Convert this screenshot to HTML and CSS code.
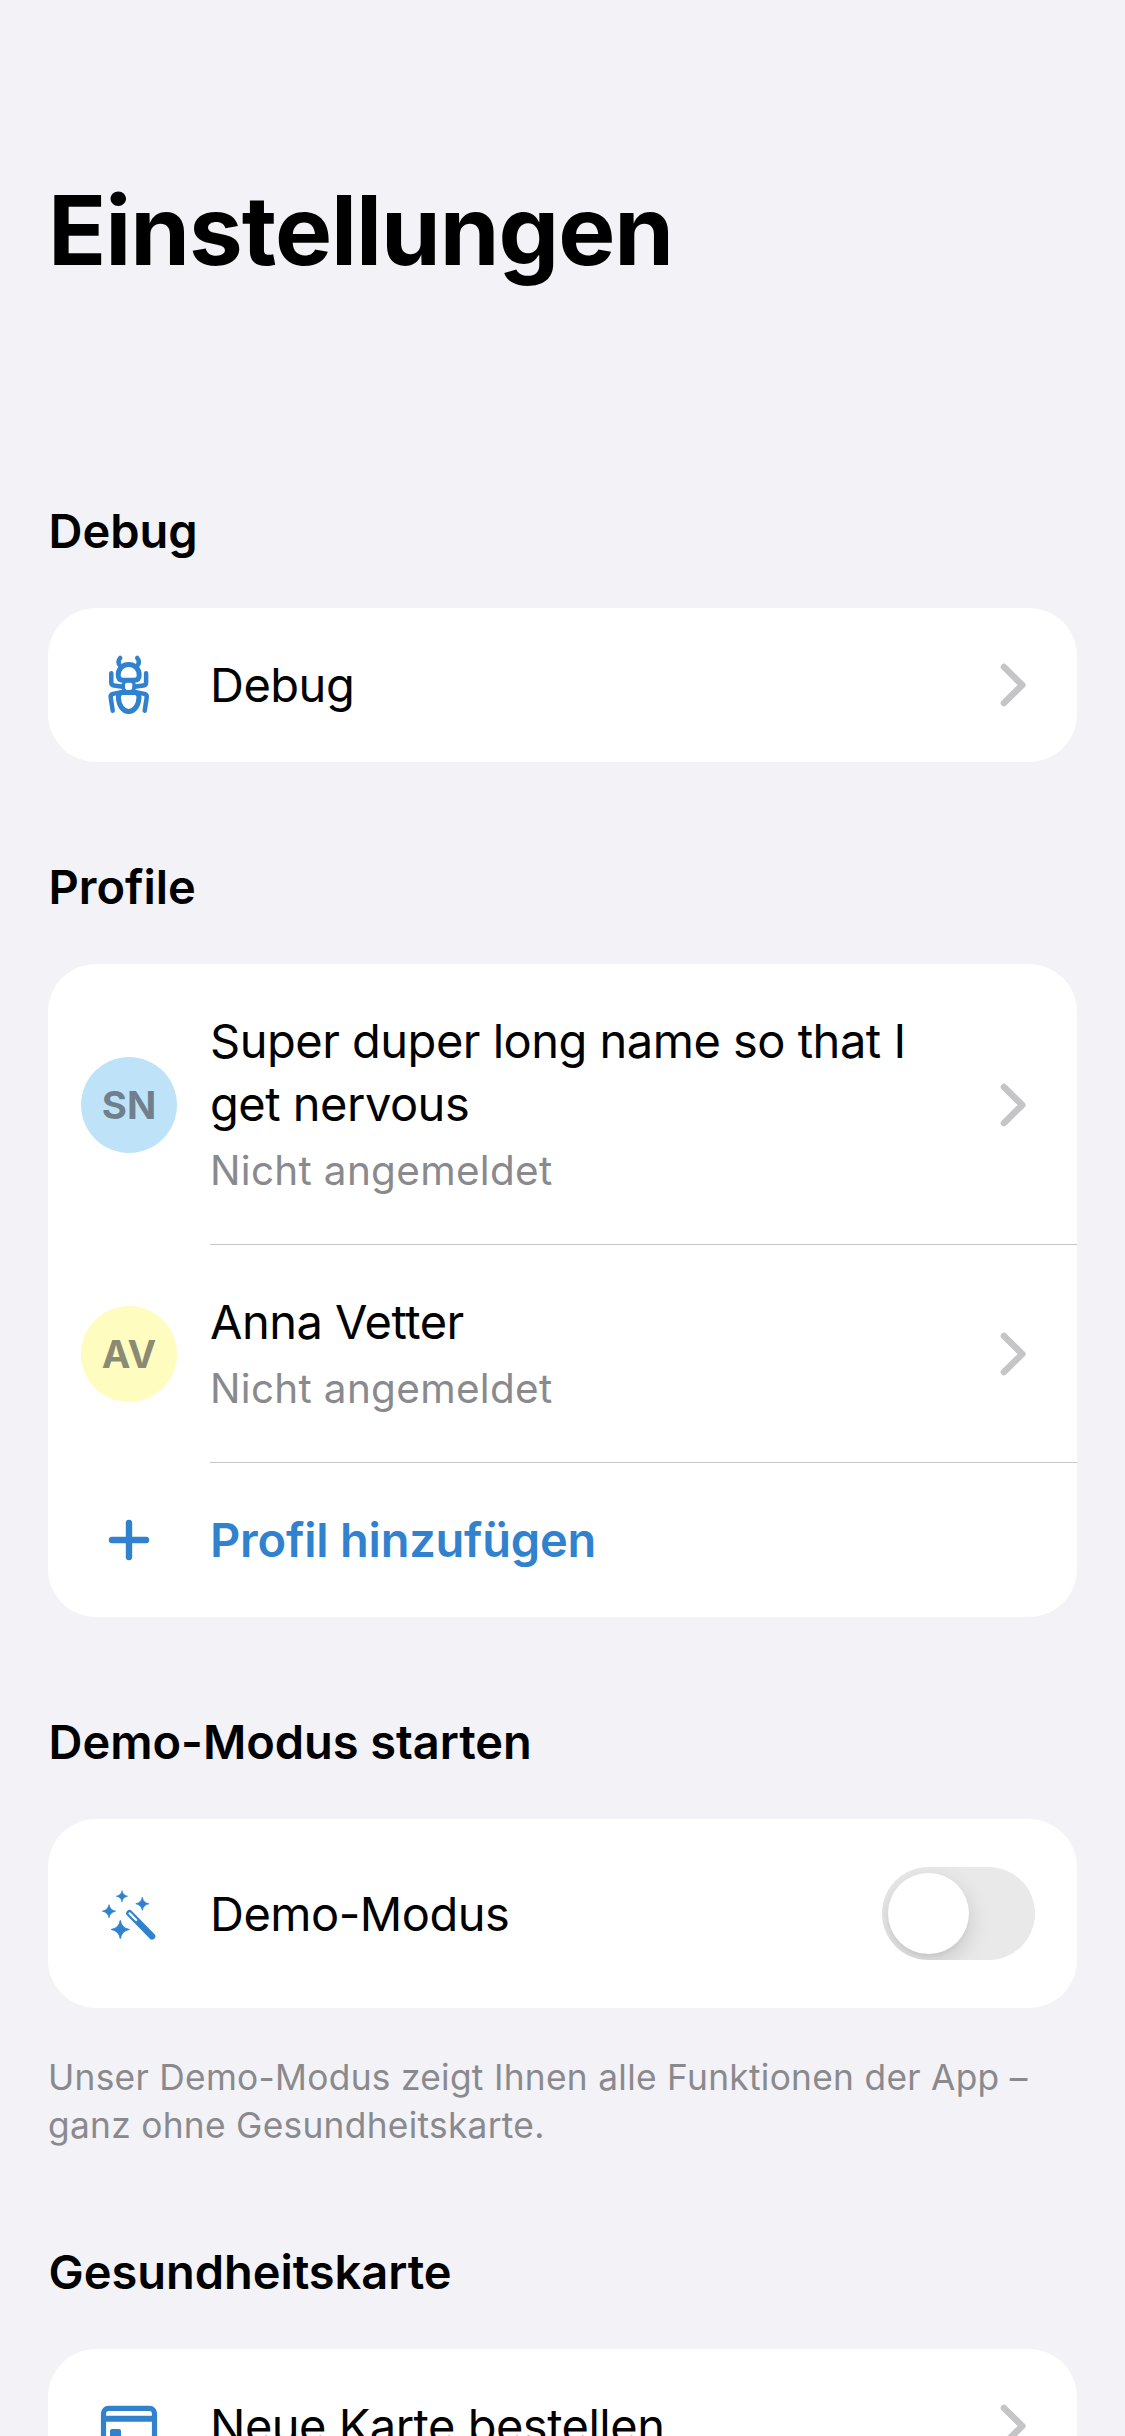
FILE: index.html
```
<!DOCTYPE html>
<html lang="de">
<head>
<meta charset="utf-8">
<title>Einstellungen</title>
<link rel="stylesheet" href="styles.css">
</head>
<body>
<svg class="defs" aria-hidden="true">
  <symbol id="chevron" viewBox="0 0 26 44">
    <path d="M4 4 22.3 22 4 40" fill="none" stroke="currentColor" stroke-width="6.6" stroke-linecap="round" stroke-linejoin="round"/>
  </symbol>
  <symbol id="star" viewBox="-1 -1 2 2">
    <path d="M0-.95Q.14-.14.95 0Q.14.14 0 .95Q-.14.14-.95 0Q-.14-.14 0-.95Z" fill="currentColor" stroke="currentColor" stroke-width=".1" stroke-linejoin="round"/>
  </symbol>
</svg>
<main class="screen">
  <h1 class="title">Einstellungen</h1>

  <section class="section">
    <h2 class="heading">Debug</h2>
    <div class="card">
      <div class="row">
        <svg class="lead" viewBox="0 0 96 96" fill="none" stroke="currentColor" stroke-width="5" stroke-linecap="round" stroke-linejoin="round">
          <path d="M42 43.2C38.8 43.2 37.2 41.2 37.2 38C37.2 31.5 42 27.6 47.7 27.6S58.2 31.5 58.2 38C58.2 41.2 56.6 43.2 53.4 43.2Z"/>
          <circle cx="47.7" cy="49.3" r="5.8" stroke-width="3.6"/>
          <path d="M42 55.6H53.4C56.5 55.6 58 57.3 58 60C58 68 53.5 74.4 47.7 74.4S37.4 68 37.4 60C37.4 57.3 39 55.6 42 55.6Z"/>
          <path stroke-width="4.5" d="M39.2 21C37 23.5 36.8 26.5 39.7 29.5M56.2 21C58.4 23.5 58.6 26.5 55.7 29.5M30.3 36.3V45.4Q30.3 48 33 48.4L42 49.8M65.1 36.3V45.4Q65.1 48 62.4 48.4L53.4 49.8M31.7 73.7 29.7 60.6Q29.2 57.6 32 56.9L43 54.6M63.7 73.7 65.7 60.6Q66.2 57.6 63.4 56.9L52.4 54.6"/>
        </svg>
        <div class="content">
          <div class="label">Debug</div>
          <svg class="chevron"><use href="#chevron"/></svg>
        </div>
      </div>
    </div>
  </section>

  <section class="section">
    <h2 class="heading">Profile</h2>
    <div class="card">
      <div class="row row-double">
        <div class="lead avatar avatar-blue">SN</div>
        <div class="content">
          <div class="label">Super duper long name so that I get nervous<span class="status">Nicht angemeldet</span></div>
          <svg class="chevron"><use href="#chevron"/></svg>
        </div>
      </div>
      <div class="row row-double">
        <div class="lead avatar avatar-yellow">AV</div>
        <div class="content">
          <div class="label">Anna Vetter<span class="status">Nicht angemeldet</span></div>
          <svg class="chevron"><use href="#chevron"/></svg>
        </div>
      </div>
      <div class="row">
        <svg class="lead" viewBox="0 0 96 96" fill="none" stroke="currentColor" stroke-width="6.4" stroke-linecap="round">
          <path d="M31 48H65M48 31V65"/>
        </svg>
        <div class="content">
          <div class="label label-action">Profil hinzufügen</div>
        </div>
      </div>
    </div>
  </section>

  <section class="section">
    <h2 class="heading">Demo-Modus starten</h2>
    <div class="card">
      <div class="row row-toggle">
        <svg class="lead" viewBox="0 0 96 96">
          <use href="#star" x="35" y="24.2" width="12" height="12"/>
          <use href="#star" x="54.3" y="30.8" width="14" height="14"/>
          <use href="#star" x="21" y="38.2" width="14" height="14"/>
          <use href="#star" x="29.7" y="53.9" width="19.2" height="19.2"/>
          <path d="M48.5 47.3 71 70.3" stroke="currentColor" stroke-width="6.6" stroke-linecap="round"/>
          <path d="M48.6 47.4 55.2 54" stroke="#fff" stroke-width="2.2" stroke-linecap="round"/>
        </svg>
        <div class="content">
          <div class="label">Demo-Modus</div>
          <div class="switch"><div class="knob"></div></div>
        </div>
      </div>
    </div>
    <p class="note">Unser Demo-Modus zeigt Ihnen alle Funktionen der App – ganz ohne Gesundheitskarte.</p>
  </section>

  <section class="section">
    <h2 class="heading">Gesundheitskarte</h2>
    <div class="card">
      <div class="row">
        <svg class="lead" viewBox="0 0 96 96">
          <rect x="22.5" y="30.3" width="51" height="36" rx="5" fill="none" stroke="currentColor" stroke-width="5.2"/>
          <path d="M22 37.7H74V43.7H22Z" fill="currentColor"/>
          <rect x="29" y="51" width="11" height="9" rx="2" fill="currentColor"/>
        </svg>
        <div class="content">
          <div class="label">Neue Karte bestellen</div>
          <svg class="chevron"><use href="#chevron"/></svg>
        </div>
      </div>
    </div>
  </section>
</main>
</body>
</html>
```
FILE: styles.css
```
* { box-sizing: border-box; }

body {
  margin: 0;
  background: #f2f2f7;
  color: #000;
  font-family: Inter, "Liberation Sans", sans-serif;
}

.defs { display: none; }

.screen {
  height: 2436px;
  padding: 170px 48px 0;
  overflow: hidden;
}

.title {
  margin: 0 0 211px;
  font-size: 96px;
  font-weight: 700;
  line-height: 120px;
  letter-spacing: -1.03px;
}

.section { margin-bottom: 95px; }

.heading {
  margin: 0 0 47px 0.6px;
  font-size: 47px;
  font-weight: 600;
  line-height: 60px;
  letter-spacing: -0.05px;
}

.card {
  overflow: hidden;
  border-radius: 48px;
  background: #fff;
}

.row {
  display: flex;
  align-items: center;
  height: 154px;
}

.row-double { height: auto; }
.row-toggle { height: 189px; }

.lead {
  flex: none;
  width: 96px;
  height: 96px;
  margin: 0 33px;
  color: #3182ce;
}

.avatar {
  display: flex;
  align-items: center;
  justify-content: center;
  border-radius: 50%;
  color: rgba(60, 60, 67, 0.6);
  font-size: 38.5px;
  font-weight: 700;
  line-height: 48px;
}

.avatar-blue { background: #bee3f8; }
.avatar-yellow { background: #fefcbf; }

.content {
  display: flex;
  flex: 1;
  align-items: center;
  justify-content: space-between;
  gap: 20px;
  padding-right: 51px;
  padding-bottom: 2px;
}

.row-double .content {
  padding-top: 44.5px;
  padding-bottom: 45.5px;
  border-bottom: 1px solid #c6c6c8;
}

.row-toggle .content { padding-bottom: 0; }

.label {
  font-size: 47px;
  line-height: 63px;
  letter-spacing: -0.5px;
}

.label-action {
  color: #3182ce;
  font-weight: 600;
  letter-spacing: -0.22px;
}

.status {
  display: block;
  margin-top: 7px;
  color: #8a8a8e;
  font-size: 40.5px;
  line-height: 57px;
  letter-spacing: 0.3px;
}

.chevron {
  flex: none;
  width: 26px;
  height: 44px;
  margin-top: 2px;
  color: #c5c5c7;
}

.switch {
  width: 153px;
  height: 93px;
  margin-right: -9px;
  padding: 6px;
  overflow: hidden;
  border-radius: 47px;
  background: #e9e9e9;
}

.knob {
  width: 81px;
  height: 81px;
  border-radius: 50%;
  background: #fff;
  box-shadow: 0 8px 22px rgba(0, 0, 0, 0.15), 0 3px 3px rgba(0, 0, 0, 0.03);
}

.note {
  margin: 46px 0 -3px;
  color: #8a8a8e;
  font-size: 35.3px;
  line-height: 48px;
  letter-spacing: 0.29px;
}
```
